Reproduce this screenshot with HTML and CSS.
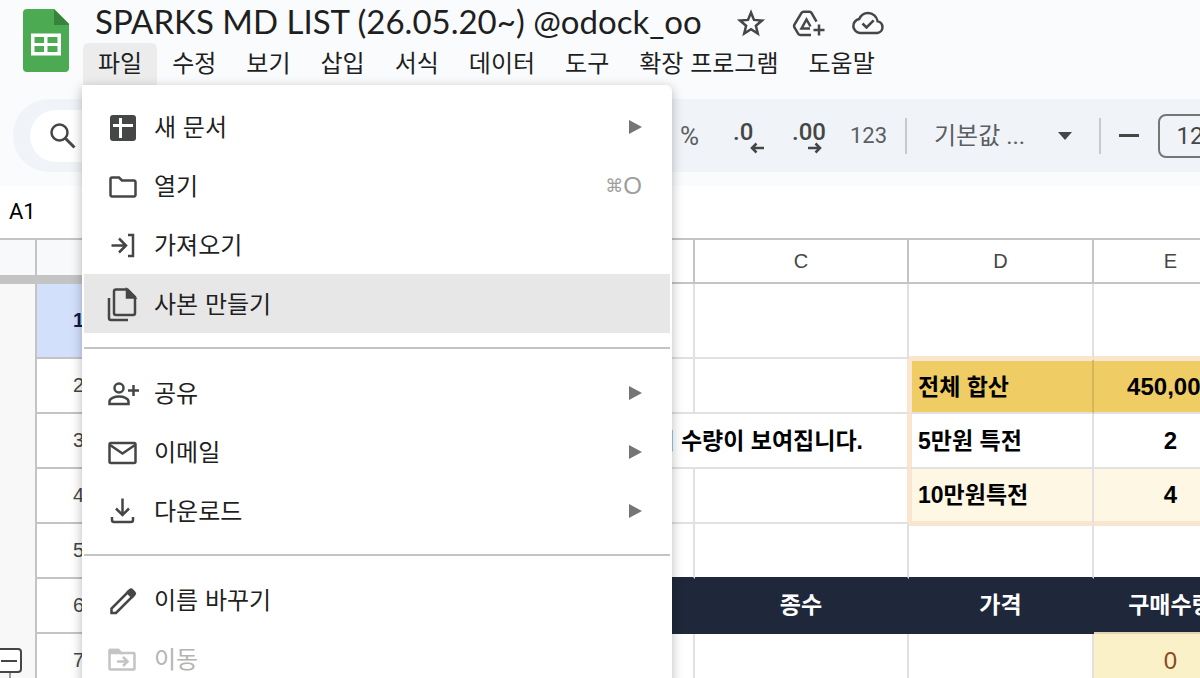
FILE: index.html
```html
<!doctype html>
<html lang="ko">

<head>
<meta charset="utf-8">
<title>SPARKS MD LIST (26.05.20~) @odock_oo</title>

<link rel="stylesheet" href="styles.css">
</head>

<body>

<header class="app-header">
  <a class="logo" href="#" aria-label="Sheets">
    <svg width="46" height="63" viewBox="0 0 46 63">
      <path fill="#4cab52" d="M4 0h27l15 15v44a4 4 0 0 1-4 4H4a4 4 0 0 1-4-4V4a4 4 0 0 1 4-4z"/>
      <path fill="#37833b" d="M31 0l15 15v1H31z"/>
      <path fill="#fff" fill-rule="evenodd" d="M8 24.500h30v22H8zM11.500 28v6h9.500v-6zM24.500 28v6h10v-6zM11.500 37v6h9.500v-6zM24.500 37v6h10v-6z"/>
    </svg>
  </a>

  <div class="titles">
    <div class="title-row">
      <h1>SPARKS MD LIST (26.05.20~) @odock_oo</h1>
      <button class="title-button" aria-label="별표">
        <svg width="28" height="28" viewBox="0 0 28 28" class="line">
          <path d="M14 3.500l3 7.400 8 .6-6.100 5.200 1.900 7.800-6.800-4.200-6.800 4.200 1.900-7.800L3 11.500l8-.6z"/>
        </svg>
      </button>
      <button class="title-button" aria-label="드라이브에 추가">
        <svg width="33" height="28" viewBox="-1 0 33 28" class="line">
          <path d="M19 26H8.500c-1 0-1.700-.4-2.200-1.200l-4-6.600c-.4-.8-.4-1.500 0-2.300l7.200-12c.5-.8 1.100-1.200 2-1.200h6c.9 0 1.600.4 2 1.200l5 8.800"/>
          <path d="M18 19.500H9.500l5-9 4 7"/>
          <path d="M27 15.500v11M21.500 21h11"/>
        </svg>
      </button>
      <button class="title-button" aria-label="드라이브에 저장됨">
        <svg width="34" height="24" viewBox="-2 0 34 24" class="line">
          <path d="M8 22a7 7 0 0 1-.8-13.900C8.800 4.500 12 2 16 2c5 0 8.800 3.500 9.600 8.200A6 6 0 0 1 25.500 22z"/>
          <path d="M10.500 12.500l4 4 7.200-7.200"/>
        </svg>
      </button>
    </div>

    <nav class="menubar">
      <div class="menu-holder">
        <button class="menu-title open">파일</button>

        <div class="menu" role="menu">
          <button class="menu-item" role="menuitem">
            <svg class="icon" viewBox="0 0 32 32"><rect x="4" y="4" width="26" height="26" rx="3" fill="#444746"/><path stroke="#fff" stroke-width="3" d="M7 14.500h20M14.500 7v20"/></svg>
            <span class="label">새 문서</span>
            <span class="arrow"></span>
          </button>
          <button class="menu-item" role="menuitem">
            <svg class="icon line" viewBox="0 0 32 32"><path d="M4.500 9a1.500 1.500 0 0 1 1.500-1.500h7l3 3h12a1.500 1.500 0 0 1 1.500 1.500v13a1.500 1.500 0 0 1-1.500 1.500H6A1.500 1.500 0 0 1 4.500 25z"/></svg>
            <span class="label">열기</span>
            <span class="shortcut"><span class="key">⌘</span>O</span>
          </button>
          <button class="menu-item" role="menuitem">
            <svg class="icon line" viewBox="0 0 32 32"><path d="M5.500 16.500h14M13 9.500l7 7-7 7M22 6h5v21h-5"/></svg>
            <span class="label">가져오기</span>
          </button>
          <button class="menu-item hover" role="menuitem">
            <svg class="icon line" viewBox="0 0 32 32"><path d="M10 1.500h11.500l7.500 7.500v16a2 2 0 0 1-2 2H10a2 2 0 0 1-2-2v-21.500a2 2 0 0 1 2-2zM3 10v20a2 2 0 0 0 2 2h17"/><path fill="#444746" d="M21 2v7.500h7.500z"/></svg>
            <span class="label">사본 만들기</span>
          </button>
          <hr>
          <button class="menu-item" role="menuitem">
            <svg class="icon line" viewBox="0 0 32 32"><circle cx="13" cy="11" r="4.500"/><path d="M3.500 27v-2.500c0-3 5-5 9.500-5s9.500 2 9.500 5v2.500zM27.500 8v11M22 13.500h11"/></svg>
            <span class="label">공유</span>
            <span class="arrow"></span>
          </button>
          <button class="menu-item" role="menuitem">
            <svg class="icon line" viewBox="0 0 32 32"><rect x="3.500" y="7" width="26" height="20" rx="1.500"/><path d="M4 9l12.500 8.500L29 9"/></svg>
            <span class="label">이메일</span>
            <span class="arrow"></span>
          </button>
          <button class="menu-item" role="menuitem">
            <svg class="icon line" viewBox="0 0 32 32"><path d="M16.500 3.500v16M10 13.500l6.500 6.500L23 13.500M6 22v3a2 2 0 0 0 2 2h17a2 2 0 0 0 2-2v-3"/></svg>
            <span class="label">다운로드</span>
            <span class="arrow"></span>
          </button>
          <hr>
          <button class="menu-item" role="menuitem">
            <svg class="icon line" viewBox="0 0 32 32"><path d="M5.500 29v-4.500L22.500 7.500l4.500 4.500L10 29z"/><path fill="#444746" d="M21.500 8.500l2.500-2.500a1.500 1.500 0 0 1 2 0l2.500 2.500a1.500 1.500 0 0 1 0 2L26 13z"/></svg>
            <span class="label">이름 바꾸기</span>
          </button>
          <button class="menu-item" role="menuitem" disabled>
            <svg class="icon line" viewBox="0 0 32 32"><path d="M3.500 8a1 1 0 0 1 1-1h8l2.500 3h12.500a1 1 0 0 1 1 1v14.500a1 1 0 0 1-1 1h-23a1 1 0 0 1-1-1z"/><path fill="currentColor" d="M4 7h8l2.500 3H4z"/><path d="M11 18.500h10M17 14l4.500 4.500L17 23"/></svg>
            <span class="label">이동</span>
          </button>
        </div>
      </div>
      <button class="menu-title">수정</button>
      <button class="menu-title">보기</button>
      <button class="menu-title">삽입</button>
      <button class="menu-title">서식</button>
      <button class="menu-title">데이터</button>
      <button class="menu-title">도구</button>
      <button class="menu-title">확장 프로그램</button>
      <button class="menu-title">도움말</button>
    </nav>
  </div>
</header>

<div class="toolbar">
  <button class="search" aria-label="메뉴 검색">
    <svg width="28" height="28" viewBox="0 0 28 28" class="line"><circle cx="10.500" cy="10.500" r="8"/><path stroke-width="3" d="M16.500 16.500l9 9"/></svg>
  </button>
  <div class="tools">
    <button class="tool percent">%</button>
    <button class="tool decimal">.0
      <svg width="14" height="12" viewBox="0 0 14 12" class="line"><path d="M14 6H2M6.500 1.500L2 6l4.500 4.500"/></svg>
    </button>
    <button class="tool decimal">.00
      <svg width="14" height="12" viewBox="0 0 14 12" class="line"><path d="M0 6h12M7.500 1.500L12 6l-4.500 4.500"/></svg>
    </button>
    <button class="tool number">123</button>
    <span class="divider"></span>
    <button class="tool font">기본값 ...<span class="caret"></span></button>
    <span class="divider"></span>
    <button class="tool minus" aria-label="글꼴 크기 줄이기"></button>
    <input class="font-size" type="text" value="12" aria-label="글꼴 크기">
  </div>
</div>

<div class="name-bar">
  <input class="name-box" type="text" value="A1" aria-label="이름 상자">
</div>

<main class="sheet">
  <table>
    <colgroup>
      <col class="col-gutter"><col class="col-head"><col class="col-a"><col class="col-b"><col class="col-c"><col class="col-d"><col class="col-e">
    </colgroup>
    <thead>
      <tr>
        <td class="gutter corner"></td><td class="corner"></td>
        <th></th><th></th><th>C</th><th>D</th><th>E</th>
      </tr>
    </thead>
    <tbody>
      <tr class="tall">
        <td class="gutter"></td><th class="selected">1</th>
        <td></td><td></td><td></td><td class="above-box"></td><td class="above-box"></td>
      </tr>
      <tr>
        <td class="gutter"></td><th>2</th>
        <td></td><td></td><td class="before-box"></td>
        <td class="box-left box-top gold">전체 합산</td><td class="box-top gold amount">450,000</td>
      </tr>
      <tr>
        <td class="gutter"></td><th>3</th>
        <td class="note before-box" colspan="3">입력시 수량이 보여집니다.</td>
        <td class="box-left">5만원 특전</td><td class="amount">2</td>
      </tr>
      <tr>
        <td class="gutter"></td><th>4</th>
        <td></td><td></td><td class="before-box"></td>
        <td class="box-left box-bottom cream">10만원특전</td><td class="box-bottom cream amount">4</td>
      </tr>
      <tr class="above-navy">
        <td class="gutter"></td><th>5</th>
        <td></td><td></td><td></td><td class="below-box"></td><td class="below-box"></td>
      </tr>
      <tr class="navy">
        <td class="gutter"></td><th>6</th>
        <td></td><td></td><td>종수</td><td>가격</td><td class="last">구매수량</td>
      </tr>
      <tr>
        <td class="gutter"><button class="group-toggle" aria-label="그룹 접기"></button></td><th>7</th>
        <td></td><td></td><td></td><td></td><td class="count">0</td>
      </tr>
    </tbody>
  </table>
</main>

</body>
</html>
```
FILE: styles.css
```css
* {
  box-sizing: border-box;
}

body {
  background-color: #f9fbfd;
  color: #1f1f1f;
  font-family: "Liberation Sans", "Noto Sans CJK KR", sans-serif;
  font-size: 24px;
  height: 100vh;
  margin: 0;
  overflow: hidden;
}

button, input {
  background: none;
  border: 0;
  color: inherit;
  font: inherit;
  margin: 0;
  padding: 0;
}

button {
  cursor: pointer;
  flex: none;
}

svg {
  display: block;
  flex: none;
  overflow: visible;
}

.line {
  fill: none;
  stroke: currentColor;
  stroke-width: 2.5px;
}

/* header */

.app-header {
  display: flex;
  height: 99px;
}

.logo {
  margin: 9px 14px 0 23px;
}

.title-row {
  display: flex;
  align-items: center;
  height: 43px;
  padding-left: 12px;
}

h1 {
  font-family: Lato, sans-serif;
  font-size: 33px;
  font-weight: 400;
  line-height: 43px;
  margin: 0 22px 0 0;
  white-space: nowrap;
}

.title-button {
  color: #444746;
  padding: 2px 13px 0;
}

.menubar {
  display: flex;
  font-family: "Noto Sans CJK KR", sans-serif;
}

.menu-holder {
  position: relative;
}

.menu-title {
  height: 42px;
  line-height: 36px;
  padding: 0 15px 4px;
  white-space: nowrap;
}

.menu-title.open {
  background-color: #ececec;
  border-radius: 6px 6px 0 0;
}

.menu {
  position: absolute;
  top: 42px;
  left: -1px;
  z-index: 2;
  width: 590px;
  padding: 12px 2px;
  background-color: #fff;
  border-radius: 0 6px 6px 6px;
  box-shadow: 0 3px 12px rgba(0, 0, 0, .28);
}

.menu-item {
  display: flex;
  align-items: center;
  width: 100%;
  height: 59px;
  padding: 0 28px 0 22px;
  text-align: left;
}

.menu-item.hover {
  background-color: #e7e7e7;
}

.menu-item:disabled {
  color: #b4b4b4;
}

.menu-item .label {
  flex: 1;
  line-height: 32px;
  padding-bottom: 2px;
}

.icon {
  width: 32px;
  height: 32px;
  margin-right: 16px;
  color: #444746;
}

.menu-item:disabled .icon {
  color: #c4c4c4;
}

.arrow {
  border-left: 13px solid #757575;
  border-top: 7px solid transparent;
  border-bottom: 7px solid transparent;
}

.shortcut {
  color: #9e9e9e;
  font-family: "Liberation Sans", "DejaVu Sans", sans-serif;
}

.shortcut .key {
  font-size: 18px;
  vertical-align: 2px;
}

.menu hr {
  border: 0;
  border-top: 2px solid #c4c4c4;
  margin: 14px 0;
}

/* toolbar */

.toolbar {
  display: flex;
  align-items: center;
  height: 73px;
  margin-left: 13px;
  margin-bottom: 14px;
  padding-left: 17px;
  background-color: #f0f4f9;
  border-radius: 36px 0 0 36px;
  color: #444746;
  overflow: hidden;
}

.search {
  height: 52px;
  width: 200px;
  padding-left: 19px;
  background-color: #fff;
  border-radius: 26px;
}

.tools {
  display: flex;
  align-items: center;
  flex: none;
  margin-left: 450px;
  font-family: Roboto, "Noto Sans CJK KR", sans-serif;
}

.tool {
  height: 44px;
  line-height: 44px;
  color: #5c5f61;
  white-space: nowrap;
}

.percent {
  width: 53px;
  font-size: 26px;
  text-align: left;
}

.decimal {
  position: relative;
  width: 59px;
  padding-bottom: 8px;
  color: #444746;
  font-weight: 500;
  line-height: 32px;
  text-align: left;
}

.decimal svg {
  position: absolute;
  right: 28px;
  bottom: 4px;
}

.decimal + .decimal svg {
  right: 29px;
}

.number {
  width: 35px;
  font-size: 22px;
  display: flex;
  justify-content: center;
}

.divider {
  width: 2px;
  height: 36px;
  margin: 0 27px 0 19px;
  background-color: #c7cacd;
}

.font {
  display: flex;
  align-items: center;
  width: 138px;
  justify-content: space-between;
}

.caret {
  border-top: 8px solid #444746;
  border-left: 7px solid transparent;
  border-right: 7px solid transparent;
}

.tools .font + .divider {
  margin: 0 18px 0 27px;
}

.minus {
  width: 20px;
  height: 3px;
  background-color: #444746;
}

.font-size {
  width: 64px;
  height: 44px;
  margin-left: 19px;
  border: 2px solid #747775;
  border-radius: 8px;
  text-align: center;
}

/* cell name */

.name-bar {
  height: 54px;
  padding-left: 9px;
  background-color: #fff;
  border-bottom: 2px solid #c4c4c4;
}

.name-box {
  width: 110px;
  height: 51px;
  color: #000;
  font-family: Roboto, sans-serif;
  font-size: 22px;
}

/* grid */

.sheet {
  background-color: #fff;
}

table {
  border-collapse: separate;
  border-spacing: 0;
  table-layout: fixed;
  width: 1249px;
}

.col-gutter { width: 37px; }
.col-head { width: 85px; }
.col-a { width: 100px; }
.col-b { width: 473px; }
.col-c { width: 214px; }
.col-d { width: 185px; }
.col-e { width: 155px; }

td, th {
  height: 55px;
  padding: 0;
  border-right: 2px solid #e1e1e1;
  border-bottom: 2px solid #e1e1e1;
  line-height: 32px;
  white-space: nowrap;
}

th {
  border-color: #c4c4c4;
  color: #444746;
  font-size: 20px;
  font-weight: 400;
}

tbody th {
  padding-bottom: 2px;
}

td {
  color: #000;
  font-size: 23px;
  font-weight: 700;
}

thead th, thead td {
  height: 44px;
}

.tall td, .tall th {
  height: 75px;
}

.gutter {
  position: relative;
  background-color: #f8f8f8;
  border-right-color: #c4c4c4;
  border-bottom: 0;
}

thead .corner {
  background-color: #f8f9fa;
  border-right-color: #c4c4c4;
  border-bottom: 9px solid #c4c4c4;
}

th.selected {
  background-color: #d3e0fb;
  color: #0b1d51;
  font-weight: 700;
}

.note {
  padding-right: 44px;
  text-align: right;
}

.above-box {
  border-bottom: 3px solid #f9e5d0;
}

.below-box {
  border-top: 2px solid #f9e5d0;
}

.before-box {
  border-right-color: #f9e5d0;
}

.box-left {
  padding-left: 6px;
  border-left: 3px solid #f9e5d0;
}

.box-top {
  border-top: 2px solid #f9e5d0;
}

.box-bottom {
  border-bottom: 3px solid #f9e5d0;
}

.gold {
  background-color: #efcd64;
  border-right-color: #d6b757;
}

.cream {
  background-color: #fdf7e3;
}

.amount, .count {
  font-size: 24px;
  text-align: center;
}

.above-navy td:not(.gutter) {
  border-bottom-color: #1f283a;
}

.navy td:not(.gutter) {
  padding-bottom: 2px;
  background-color: #1f283a;
  border-color: #1f283a;
  color: #fff;
  text-align: center;
}

.navy .last:not(.gutter) {
  border-bottom-color: #ddd6b4;
}

.count {
  background-color: #fbf1c9;
  color: #8a4a20;
  font-weight: 400;
}

.group-toggle {
  position: absolute;
  top: 14px;
  left: -4px;
  width: 26px;
  height: 25px;
  background-color: #fff;
  border: 2px solid #444746;
  border-radius: 4px;
}

.group-toggle::before {
  content: "";
  position: absolute;
  top: 10px;
  left: 3px;
  width: 16px;
  height: 2px;
  background-color: #444746;
}

.group-toggle::after {
  content: "";
  position: absolute;
  top: 23px;
  left: 11px;
  width: 2px;
  height: 20px;
  background-color: #9a9c9e;
}
```
